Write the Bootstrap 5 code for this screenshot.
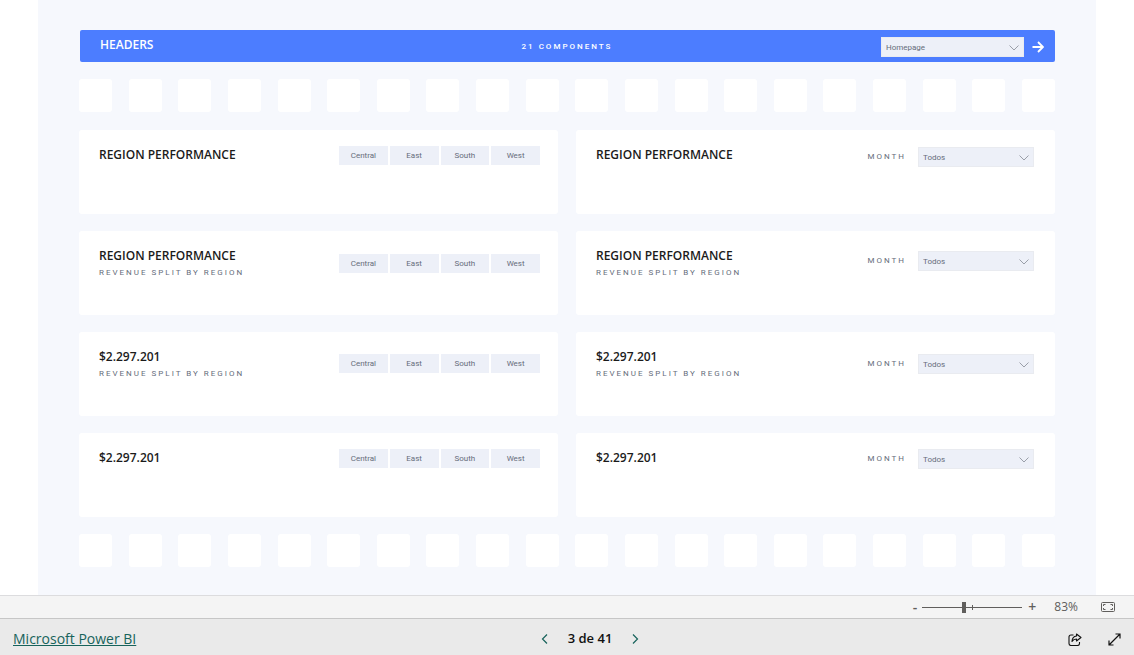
<!DOCTYPE html>
<html lang="es">
<head>
<meta charset="utf-8">
<meta name="viewport" content="width=device-width, initial-scale=1">
<title>Headers - Microsoft Power BI</title>
<link href="https://cdn.jsdelivr.net/npm/bootstrap@5.3.0/dist/css/bootstrap.min.css" rel="stylesheet">
<style>
  body { font-family: "Open Sans", "Noto Sans", sans-serif; font-size: 13px; color: #1b1b1b; }
  .report { background: #f6f8fd; margin: 0 38px; padding: 30px 41px 28px; gap: 17px; }
  .din { font-family: Roboto, sans-serif; font-size: 8px; line-height: 12px; color: #666d7b; }
  .spaced { letter-spacing: 2px; }
  .head-bar { background: #4c7dff; height: 32px; border-radius: 2px; padding: 0 11px 0 20px; margin-left: 1px; }
  .head-bar h1 { font-size: 12px; line-height: 16px; font-weight: 600; padding-bottom: 2px; }
  .head-bar .count { color: #fff; font-weight: 500; padding: 1px 10px 0 0; }
  .tile { width: 33px; height: 33px; background: #fff; border-radius: 3px; }
  .panels { display: grid; grid-template-columns: 1fr 1fr; gap: 17px 18px; margin-top: 1px; }
  .panel { background: #fff; border-radius: 3px; min-height: 84px; padding: 16px 18px 16px 20px; }
  .panel h2 { font-size: 12px; line-height: 17px; font-weight: 600; margin: 0 0 3px; }
  .slicer { display: grid; grid-template-columns: repeat(4, 1fr); gap: 2px; width: 201px; }
  .slicer button { border: 0; padding: 0; height: 19px; background: #edf0f8; }
  .pick { appearance: none; border: 1px solid #e9ebf0; border-radius: 0; height: 20px; width: 116px; padding: 2px 16px 0 4px;
    background: #edf0f8 url("data:image/svg+xml,%3Csvg xmlns='http://www.w3.org/2000/svg' width='10' height='6'%3E%3Cpath d='M.5.5 5 5 9.500.5' fill='none' stroke='%239a9fa9'/%3E%3C/svg%3E") no-repeat right 4px top 7px; }
  .pick-home { width: 143px; }
  .go { padding-top: 1px; }
  .month { padding-right: 3px; }
  .month label { margin-right: 12px; }
  .drop-1 { padding-top: 1px; }
  .drop-4 { padding-top: 4px; }
  .drop-6 { padding-top: 6px; }
  .drop-7 { padding-top: 7px; }
  .plain { border: 0; background: none; padding: 0; line-height: 0; color: inherit; }
  .status { height: 24px; background: #f4f4f4; border-top: 1px solid #dcdcde; border-bottom: 1px solid #c6c6c6; color: #605e5c; padding: 0 19px; font-size: 12px; }
  .status .sign { font-size: 14px; font-weight: 600; line-height: 20px; }
  .zoomer { appearance: none; width: 100px; height: 12px; margin: 0 6px 0 5px;
    background: linear-gradient(#605e5c, #605e5c) center / 100% 1px no-repeat, linear-gradient(#605e5c, #605e5c) center / 1px 5px no-repeat; }
  .zoomer::-webkit-slider-thumb { appearance: none; width: 4px; height: 11px; background: #605e5c; }
  .zoomer::-moz-range-thumb { width: 4px; height: 11px; border: 0; border-radius: 0; background: #605e5c; }
  .zoom-value { margin: 0 23px 0 18px; }
  .foot { height: 36px; background: #eaeaea; padding: 4px 13px 0; color: #111; }
  .foot a { color: #17635b; font-size: 14px; }
  .foot .tools { gap: 26px; }
  .pages { font-size: 13px; font-weight: 600; gap: 20px; color: #111; margin-left: 46px; }
  .pages .plain { color: #17635b; }
</style>
<script src="https://cdn.jsdelivr.net/npm/bootstrap@5.3.0/dist/js/bootstrap.bundle.min.js"></script>
</head>
<body class="d-flex flex-column min-vh-100 bg-white">
<main class="report flex-grow-1 d-flex flex-column">
  <header class="head-bar row g-0 align-items-center">
    <h1 class="col text-white m-0">HEADERS</h1>
    <div class="col text-center din spaced count">21 COMPONENTS</div>
    <div class="col go d-flex justify-content-end align-items-center gap-2">
      <select class="pick pick-home din" aria-label="Page"><option>Homepage</option></select>
      <button class="plain text-white" aria-label="Go to page"><svg width="12" height="12" viewBox="0 0 12 12" fill="none" stroke="currentColor" stroke-width="1.800"><path d="M.5 6H11M6 1l5 5-5 5"/></svg></button>
    </div>
  </header>
  <div class="tiles d-flex justify-content-between"></div>
  <section class="panels">
    <article class="panel d-flex justify-content-between align-items-start">
      <div><h2>REGION PERFORMANCE</h2></div>
      <div><div class="slicer"><button class="din">Central</button><button class="din">East</button><button class="din">South</button><button class="din">West</button></div></div>
    </article>
    <article class="panel d-flex justify-content-between align-items-start">
      <div><h2>REGION PERFORMANCE</h2></div>
      <div class="month d-flex align-items-center drop-1"><label class="din spaced" for="m1">MONTH</label><select id="m1" class="pick din"><option>Todos</option></select></div>
    </article>
    <article class="panel d-flex justify-content-between align-items-start">
      <div><h2>REGION PERFORMANCE</h2><div class="din spaced">REVENUE SPLIT BY REGION</div></div>
      <div class="drop-7"><div class="slicer"><button class="din">Central</button><button class="din">East</button><button class="din">South</button><button class="din">West</button></div></div>
    </article>
    <article class="panel d-flex justify-content-between align-items-start">
      <div><h2>REGION PERFORMANCE</h2><div class="din spaced">REVENUE SPLIT BY REGION</div></div>
      <div class="month d-flex align-items-center drop-4"><label class="din spaced" for="m2">MONTH</label><select id="m2" class="pick din"><option>Todos</option></select></div>
    </article>
    <article class="panel d-flex justify-content-between align-items-start">
      <div><h2>$2.297.201</h2><div class="din spaced">REVENUE SPLIT BY REGION</div></div>
      <div class="drop-6"><div class="slicer"><button class="din">Central</button><button class="din">East</button><button class="din">South</button><button class="din">West</button></div></div>
    </article>
    <article class="panel d-flex justify-content-between align-items-start">
      <div><h2>$2.297.201</h2><div class="din spaced">REVENUE SPLIT BY REGION</div></div>
      <div class="month d-flex align-items-center drop-6"><label class="din spaced" for="m3">MONTH</label><select id="m3" class="pick din"><option>Todos</option></select></div>
    </article>
    <article class="panel d-flex justify-content-between align-items-start">
      <div><h2>$2.297.201</h2></div>
      <div><div class="slicer"><button class="din">Central</button><button class="din">East</button><button class="din">South</button><button class="din">West</button></div></div>
    </article>
    <article class="panel d-flex justify-content-between align-items-start">
      <div><h2>$2.297.201</h2></div>
      <div class="month d-flex align-items-center"><label class="din spaced" for="m4">MONTH</label><select id="m4" class="pick din"><option>Todos</option></select></div>
    </article>
  </section>
  <div class="tiles d-flex justify-content-between"></div>
</main>
<div class="status d-flex justify-content-end align-items-center">
  <button class="plain sign" aria-label="Zoom out">-</button>
  <input class="zoomer" type="range" min="0" max="100" value="41" aria-label="Zoom">
  <button class="plain sign" aria-label="Zoom in">+</button>
  <span class="zoom-value">83%</span>
  <button class="plain" aria-label="Fit to page"><svg width="14" height="10" viewBox="0 0 14 10" fill="none" stroke="currentColor"><rect x=".5" y=".5" width="13" height="9" rx="1"/><path d="M4.500 2.500h-2V4M9.500 2.500h2V4M4.500 7.500h-2V6M9.500 7.500h2V6"/></svg></button>
</div>
<footer class="foot row g-0 align-items-center">
  <div class="col"><a href="#">Microsoft Power BI</a></div>
  <nav class="col-auto pages d-flex align-items-center" aria-label="Pages">
    <button class="plain" aria-label="Previous page"><svg width="7" height="10" viewBox="0 0 7 10" fill="none" stroke="currentColor" stroke-width="1.200"><path d="M6 .5 1.500 5 6 9.500"/></svg></button>
    <span>3 de 41</span>
    <button class="plain" aria-label="Next page"><svg width="7" height="10" viewBox="0 0 7 10" fill="none" stroke="currentColor" stroke-width="1.200"><path d="M1 .5 5.500 5 1 9.500"/></svg></button>
  </nav>
  <div class="col tools d-flex justify-content-end align-items-center">
    <button class="plain" aria-label="Share"><svg width="14" height="13" viewBox="0 0 14 13" fill="none" stroke="currentColor" stroke-width="1.100"><path d="M5.500 2H3Q1 2 1 4v6.500q0 2 2 2h6.500q2 0 2-2V9"/><path d="M8.500 1 13 4.500 8.500 8V6Q5.500 6 4 8.500 4.300 3.500 8.500 3Z" stroke-linejoin="round"/></svg></button>
    <button class="plain" aria-label="Full screen"><svg width="13" height="13" viewBox="0 0 13 13" fill="none" stroke="currentColor" stroke-width="1.200"><path d="M1 12 12 1M7.500 1H12v4.500M1 7.500V12h4.500"/></svg></button>
  </div>
</footer>
<script>
  document.querySelectorAll('.tiles').forEach(function (row) {
    for (let i = 0; i < 20; i++) {
      const tile = document.createElement('div');
      tile.className = 'tile';
      row.append(tile);
    }
  });
</script>
</body>
</html>
